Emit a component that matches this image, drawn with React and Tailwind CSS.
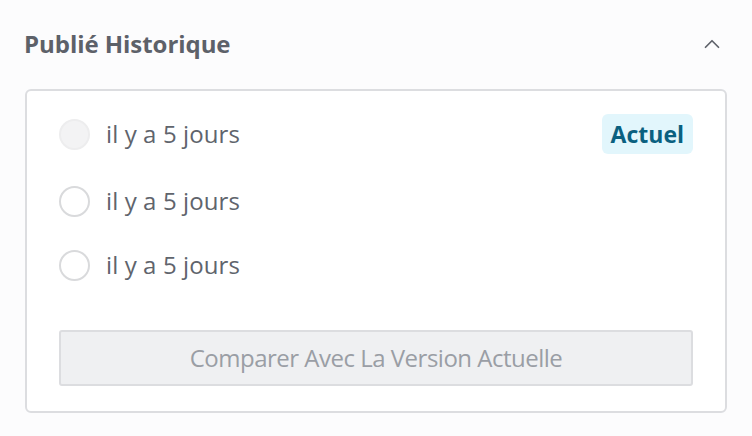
import { ChevronUp } from 'lucide-react';

const rows = [
  { label: 'il y a 5 jours', current: true },
  { label: 'il y a 5 jours', current: false },
  { label: 'il y a 5 jours', current: false },
];

export default function App() {
  return (
    <div className="w-[752px] h-[436px] bg-[#fcfcfd] font-['Open_Sans',sans-serif] px-[25px] pt-[22px]">
      {/* Header */}
      <div className="flex items-center justify-between h-[44px] mb-[23px]">
        <h2 className="text-[24px] font-bold text-[#5d6169] tracking-[-0.05px] -ml-px">Publié Historique</h2>
        <ChevronUp size={26} strokeWidth={1.6} className="text-[#5f636b] mr-[2px]" />
      </div>

      {/* Card */}
      <div className="bg-white border-2 border-[#dcdde0] rounded-[6px] px-[32px] pt-[23px] pb-[25px]">
        <div className="flex flex-col">
          {rows.map((row, i) => (
            <div key={i} className={`flex items-center justify-between ${i === 0 ? 'h-[40px] mb-[29px]' : 'h-[36px] mb-[28px]'}`}>
              <div className="flex items-center gap-[16px]">
                <span className={`w-[31px] h-[31px] rounded-full border-2 ${row.current ? 'border-[#ededee] bg-[#f3f3f4]' : 'border-[#d9dadc] bg-white'}`} />
                <span className="text-[24px] text-[#60646c] tracking-[0.1px]">{row.label}</span>
              </div>
              {row.current && (
                <span className="bg-[#e2f6fc] text-[#0a6080] text-[23px] font-bold rounded-[6px] px-[9px] h-[40px] flex items-center">Actuel</span>
              )}
            </div>
          ))}
        </div>
        <button className="mt-[19px] w-full h-[56px] bg-[#eff0f2] border-2 border-[#dcdde0] rounded-[3px] text-[24px] text-[#9a9ea5] tracking-[-0.5px]">
          Comparer Avec La Version Actuelle
        </button>
      </div>
    </div>
  );
}
